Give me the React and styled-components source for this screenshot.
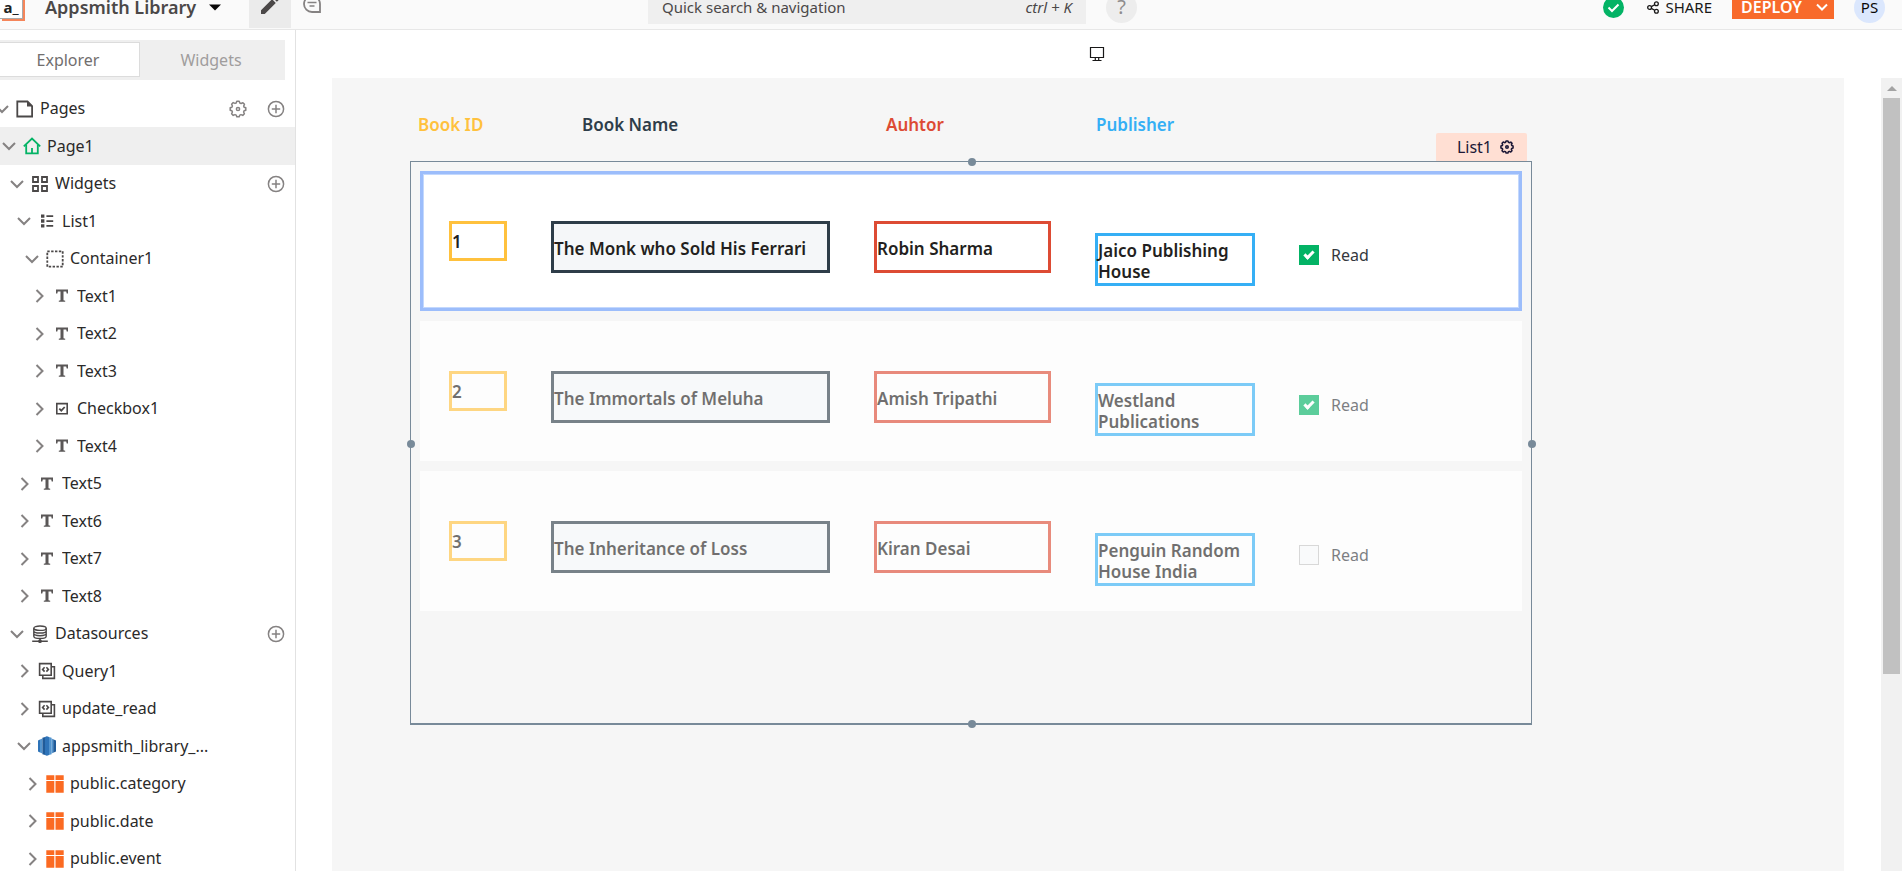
import React from 'react';
import styled, { createGlobalStyle, css } from 'styled-components';

const GlobalStyle = createGlobalStyle`
  *, *::before, *::after { box-sizing: border-box; }
  body {
    margin: 0;
    font-family: "Segoe UI", "Noto Sans", "Open Sans", sans-serif;
    font-size: 16px;
    line-height: 21px;
    color: #2b2a2a;
    background: #fff;
  }
  button, input { font: inherit; color: inherit; }
  svg { display: block; flex: none; }
`;

const resetButton = css`
  border: 0;
  padding: 0;
  background: none;
  display: flex;
  align-items: center;
  justify-content: center;
  cursor: pointer;
`;

const Page = styled.div`
  display: flex;
  flex-direction: column;
  height: 100vh;
  overflow: hidden;
`;

/* ---------- top bar ---------- */

const TopBar = styled.header`
  flex: none;
  height: 30px;
  overflow: hidden;
  background: #fafafa;
  border-bottom: 1px solid #e7e7e7;
`;

const TopBarInner = styled.div`
  display: grid;
  grid-template-columns: minmax(0, 108fr) minmax(0, 73fr) minmax(0, 136fr);
  align-items: center;
  height: 46px;
  margin-top: -16px;
  line-height: 14px;
`;

const TopBarGroup = styled.div`
  display: flex;
  align-items: center;
`;

const Logo = styled.a`
  display: flex;
  align-items: center;
  justify-content: center;
  width: 23px;
  height: 24px;
  margin-right: 22px;
  border: 1px solid #a9a9a9;
  border-left: 0;
  background: #fff;
  box-shadow: 2px 2px 0 #f5855a;
  color: #222;
  font-size: 15px;
  font-weight: 700;
  text-decoration: none;
`;

const AppName = styled.button`
  ${resetButton}
  gap: 13px;
  margin-right: 28px;
  font-size: 18px;
  font-weight: 600;
  color: #4b4848;
`;

const EditButton = styled.button`
  ${resetButton}
  width: 42px;
  height: 42px;
  padding-bottom: 4px;
  background: #ebebeb;
`;

const CommentButton = styled.button`
  ${resetButton}
  padding-bottom: 6px;
  margin-left: 12px;
`;

const Search = styled.label`
  display: flex;
  align-items: center;
  height: 34px;
  padding: 0 14px;
  background: #efefef;
  font-size: 15px;
  color: #4b4848;
`;

const SearchInput = styled.input`
  flex: 1;
  min-width: 0;
  padding: 0;
  border: 0;
  outline: 0;
  background: none;
  &::placeholder { color: #4b4848; opacity: 1; }
`;

const Shortcut = styled.span`
  font-style: italic;
`;

const Round = styled.button`
  ${resetButton}
  width: 31px;
  height: 31px;
  border-radius: 50%;
  background: ${(p) => (p.$tone === 'user' ? '#dbe7fd' : '#ededed')};
  color: ${(p) => (p.$tone === 'user' ? '#090707' : '#8f8c8c')};
  font-size: ${(p) => (p.$tone === 'user' ? '15px' : '20px')};
`;

const HelpSlot = styled.div`
  margin-left: 20px;
  margin-right: auto;
`;

const ShareButton = styled.button`
  ${resetButton}
  gap: 6px;
  margin: 0 20px 0 23px;
  font-size: 15px;
  color: #191818;
`;

const DeployGroup = styled.div`
  display: flex;
  height: 24px;
  margin-right: 20px;
  background: #f86a2b;
  color: #fff;
`;

const DeployButton = styled.button`
  ${resetButton}
  padding: 0 9px;
  font-size: 16px;
  font-weight: 600;
`;

const DeployMenuButton = styled.button`
  ${resetButton}
  padding: 0 5px 0 4px;
`;

const AvatarSlot = styled.div`
  margin-right: 17px;
`;

/* ---------- sidebar ---------- */

const Body = styled.div`
  flex: 1;
  min-height: 0;
  display: flex;
`;

const Sidebar = styled.aside`
  flex: none;
  width: 296px;
  overflow: hidden;
  border-right: 1px solid #e2e2e2;
`;

const Tabs = styled.div`
  display: grid;
  grid-template-columns: 140px 1fr;
  height: 40px;
  margin: 10px 10px 10px 0;
  padding: 2px 0 3px;
  background: #efefef;
`;

const Tab = styled.button`
  ${resetButton}
  padding: 2px 3px 0 0;
  color: #a09d9d;
  ${(p) =>
    p.$active &&
    css`
      background: #fff;
      border: 1px solid #dcdcdc;
      border-left: 0;
      color: #716e6e;
    `}
`;

const Tree = styled.ul`
  margin: 0 0 0 -12px;
  padding: 0;
  list-style: none;
`;

const TreeRow = styled.li`
  display: flex;
  align-items: center;
  height: 37px;
  padding-left: ${(p) => 7 + Math.floor(p.$depth * 7.5)}px;
  padding-right: 10px;
  background: ${(p) => (p.$selected ? '#efefef' : 'transparent')};
  &:nth-child(even) { height: 38px; }
`;

const Toggle = styled.button`
  ${resetButton}
  width: 14px;
  height: 20px;
  margin-right: 7px;
`;

const NodeIcon = styled.span`
  width: 18px;
  margin-right: 6px;
`;

const NodeLabel = styled.span`
  flex: 1;
  min-width: 0;
  overflow: hidden;
  white-space: nowrap;
  text-overflow: ellipsis;
`;

const RowAction = styled.button`
  ${resetButton}
  margin-left: 20px;
`;

/* ---------- canvas ---------- */

const Main = styled.main`
  flex: 1;
  min-width: 0;
  display: flex;
  flex-direction: column;
`;

const DeviceBar = styled.div`
  flex: none;
  display: flex;
  align-items: center;
  justify-content: center;
  height: 48px;
  padding-right: 4px;
`;

const Stage = styled.div`
  flex: 1;
  min-height: 0;
  display: flex;
`;

const Canvas = styled.section`
  flex: 1;
  min-width: 0;
  margin: 0 37px 0 36px;
  background: #f6f6f6;
`;

const Headings = styled.div`
  display: grid;
  grid-template-columns: minmax(0, 164fr) minmax(0, 304fr) minmax(0, 210fr) minmax(0, 436fr);
  height: 83px;
  margin: 0 312px 0 86px;
  padding-top: 36px;
`;

const Heading = styled.div`
  font-size: 17px;
  font-weight: 600;
  color: ${(p) => p.$color};
`;

const ListFrame = styled.div`
  position: relative;
  display: flex;
  flex-direction: column;
  gap: 10px;
  margin: 0 312px 0 78px;
  padding: 9px 9px 112px;
  border: 1px solid #788a99;
  border-bottom-width: 2px;
`;

const NameTag = styled.button`
  ${resetButton}
  position: absolute;
  right: 4px;
  bottom: calc(100% + 1px);
  gap: 8px;
  height: 28px;
  padding: 0 13px 0 21px;
  border-radius: 2px 2px 0 0;
  background: #ffdfd3;
  color: #1d1836;
`;

const Handle = styled.span`
  position: absolute;
  width: 8px;
  height: 8px;
  border-radius: 50%;
  background: #788a99;
  ${(p) => (p.$side === 'top' || p.$side === 'bottom') && css`left: calc(50% - 3px);`}
  ${(p) => (p.$side === 'left' || p.$side === 'right') && css`top: calc(50% - 3px);`}
  ${(p) => (p.$side === 'top' || p.$side === 'left' ? css`${p.$side}: -4px;` : css`${p.$side}: -5px;`)}
`;

const BookRow = styled.article`
  display: grid;
  grid-template-columns: minmax(0, 58fr) minmax(0, 279fr) minmax(0, 177fr) minmax(0, 160fr) minmax(0, 223fr);
  column-gap: 44px;
  align-items: start;
  height: 140px;
  padding: 50px 0 0 29px;
  background: ${(p) => (p.$selected ? '#fff' : '#fdfdfd')};
  ${(p) =>
    p.$selected
      ? css`box-shadow: inset 0 0 0 3px #9cbdfb, inset 0 0 0 4px #c3d8fd;`
      : css`& > * { opacity: 0.64; }`}
`;

const Cell = styled.div`
  display: flex;
  align-items: center;
  height: ${(p) => (p.$small ? '40px' : '52px')};
  padding-top: ${(p) => (p.$small ? '0' : '2px')};
  border: 3px solid ${(p) => p.$color};
  background: ${(p) => p.$fill || 'transparent'};
  font-size: 17px;
  font-weight: 600;
  color: #231f20;
`;

const PublisherCell = styled(Cell)`
  height: 53px;
  margin-top: 12px;
`;

const ReadField = styled.label`
  display: flex;
  align-items: center;
  gap: 12px;
  margin-top: 24px;
  line-height: 20px;
  color: #35383d;
`;

const ReadBox = styled.input`
  appearance: none;
  position: relative;
  width: 20px;
  height: 20px;
  margin: 0;
  border: 1px solid #c4c4c4;
  background: #f7f9fb;
  &:checked { border-color: #03b365; background: #03b365; }
  &:checked::after {
    content: "";
    position: absolute;
    left: 6px;
    top: 3px;
    width: 6px;
    height: 10px;
    border: solid #fff;
    border-width: 0 3px 3px 0;
    transform: rotate(45deg);
  }
`;

const ScrollTrack = styled.div`
  flex: none;
  display: flex;
  flex-direction: column;
  align-items: center;
  width: 21px;
  background: #f1f1f1;
  &::after { content: ""; flex: 197; }
`;

const ScrollArrow = styled.div`
  display: flex;
  align-items: center;
  height: 20px;
`;

const ScrollThumb = styled.div`
  flex: 576;
  width: 17px;
  background: #c1c1c1;
`;

/* ---------- icons ---------- */

const Chevron = ({ open, color = '#858282' }) => (
  <svg width="14" height="14" viewBox="0 0 14 14" fill="none" stroke={color} strokeWidth="2">
    <path d={open ? 'M1 4l6 6 6-6' : 'M4.5 1l6 6-6 6'} />
  </svg>
);

const Gear = ({ size, color, width = 1.5 }) => (
  <svg width={size} height={size} viewBox="0 0 18 18" fill="none" stroke={color} strokeWidth={width} strokeLinejoin="round">
    <path d="M7.2 3 7.8 1.2h2.4L10.8 3l1.3.5 1.8-.8 1.6 1.6-.8 1.8.4 1.1 1.7.6v2.4l-1.7.6-.5 1.2.8 1.8-1.6 1.6-1.8-.8-1.2.5-.6 1.7H7.8l-.6-1.700-1.200-.5-1.800.8-1.600-1.600.8-1.800-.5-1.200-1.700-.6V7.800l1.700-.6L3.400 6l-.8-1.800 1.600-1.600 1.800.8z" />
    <circle cx="9" cy="9" r="1.6" />
  </svg>
);

const PlusCircle = () => (
  <svg width="18" height="18" viewBox="0 0 18 18" fill="none" stroke="#858282" strokeWidth="1.5">
    <circle cx="9" cy="9" r="7.6" />
    <path d="M9 4.8v8.4M4.8 9h8.4" />
  </svg>
);

const DARK = '#4b4848';

const nodeIcons = {
  page: (
    <g fill="none" stroke={DARK} strokeWidth="1.8">
      <path d="M1.300 1.500h10.200l4.600 4.600v10.400H1.300z" />
      <path d="M11 1.200v5.400h5.400z" fill={DARK} stroke="none" />
    </g>
  ),
  home: (
    <g fill="none" stroke="#03b365" strokeWidth="1.8">
      <path d="M.8 9.4 9 1.6l8.200 7.800" />
      <path d="M3.200 7.400v9h11.600v-9" />
      <path d="M9 11v5.400" />
    </g>
  ),
  widgets: (
    <g fill="none" stroke={DARK} strokeWidth="1.8">
      <path d="M2 2h5v5H2zM11 2h5v5h-5zM2 11h5v5H2zM11 11h5v5h-5z" />
    </g>
  ),
  list: (
    <g fill={DARK}>
      <path d="M3 2.400h3.400v3.400H3zM3 7.300h3.400v3.400H3zM3 12.200h3.400v3.400H3zM8.400 3.200h6.800v1.700H8.400zM8.400 8.200h6.800v1.700H8.400zM8.400 13h6.800v1.700H8.400z" />
    </g>
  ),
  container: (
    <rect x="1.300" y="1.300" width="15.400" height="15.400" fill="none" stroke={DARK} strokeWidth="1.800" strokeDasharray="2.400 1.450" />
  ),
  text: (
    <path fill="#5a5757" d="M3 2.600h12v3.800h-1.300l-.5-2h-2.700v8.800l1.700.5v1.100H5.800v-1.100l1.700-.5V4.400H4.800l-.5 2H3z" />
  ),
  checkbox: (
    <g fill="none" stroke={DARK} strokeWidth="1.600">
      <path d="M3.800 3.600h10.400v10.200H3.800z" />
      <path d="M6.300 8.600l2 2 3.400-3.600" strokeWidth="1.800" />
    </g>
  ),
  datasource: (
    <g fill="none" stroke={DARK} strokeWidth="1.400">
      <ellipse cx="9" cy="3.200" rx="6.200" ry="2.200" />
      <path d="M2.800 3.200v8c0 1.200 2.800 2.200 6.200 2.200s6.200-1 6.200-2.200v-8M2.800 5.900C2.800 7.100 5.600 8 9 8s6.200-.9 6.200-2.100M2.800 8.600c0 1.200 2.800 2.100 6.200 2.100s6.200-.9 6.200-2.100M9 13.400V16M1.200 16.200h15.600" />
      <circle cx="9" cy="16.200" r="1.200" fill={DARK} />
    </g>
  ),
  query: (
    <g fill="none" stroke={DARK} strokeWidth="1.600">
      <path d="M1.600 1.600h11.600v11.600H1.600z" />
      <path d="M13.200 4.800h3.200v11.600H4.800v-3.200" />
      <path d="M6.600 5.200 4.600 7.400l2 2.200M8.400 5.200l2 2.200-2 2.200" />
    </g>
  ),
  redshift: (
    <g>
      <path fill="#2e73b8" d="M0 3.400 2 2.600v12.800l-2-.8z" />
      <path fill="#5294cf" d="M2 2.600 4.400 1.600v14.800L2 15.400z" />
      <path fill="#205b99" d="M4.400.8 9-.6v19.200l-4.600-1.400z" />
      <path fill="#5294cf" d="M9-.6 13.600.8v16.400L9 18.600z" />
      <path fill="#2e73b8" d="M7-.1 9-.6l2 .5v18.200l-2 .5-2-.5z" />
      <path fill="#5294cf" d="M13.600 1.600 15.200 2.300v13.400l-1.600.7z" />
      <path fill="#205b99" d="M15.200 2.300 18 3.400v11.200l-2.800 1.100z" />
    </g>
  ),
  table: (
    <g fill="#fb6a22">
      <path d="M.3.3h8v4.600h-8zM9.500.3h8.200v4.600H9.500zM.3 6h8v11.700h-8zM9.500 6h8.200v11.700H9.500z" />
    </g>
  ),
};

const Glyph = ({ name }) => (
  <svg width="18" height="18" viewBox="0 0 18 18" overflow="visible" aria-hidden="true">
    {nodeIcons[name]}
  </svg>
);

/* ---------- data ---------- */

const tree = [
  { label: 'Pages', icon: 'page', depth: 0, open: true, settings: true, add: true },
  { label: 'Page1', icon: 'home', depth: 1, open: true, selected: true },
  { label: 'Widgets', icon: 'widgets', depth: 2, open: true, add: true },
  { label: 'List1', icon: 'list', depth: 3, open: true },
  { label: 'Container1', icon: 'container', depth: 4, open: true },
  { label: 'Text1', icon: 'text', depth: 5 },
  { label: 'Text2', icon: 'text', depth: 5 },
  { label: 'Text3', icon: 'text', depth: 5 },
  { label: 'Checkbox1', icon: 'checkbox', depth: 5 },
  { label: 'Text4', icon: 'text', depth: 5 },
  { label: 'Text5', icon: 'text', depth: 3 },
  { label: 'Text6', icon: 'text', depth: 3 },
  { label: 'Text7', icon: 'text', depth: 3 },
  { label: 'Text8', icon: 'text', depth: 3 },
  { label: 'Datasources', icon: 'datasource', depth: 2, open: true, add: true },
  { label: 'Query1', icon: 'query', depth: 3 },
  { label: 'update_read', icon: 'query', depth: 3 },
  { label: 'appsmith_library_...', icon: 'redshift', depth: 3, open: true },
  { label: 'public.category', icon: 'table', depth: 4 },
  { label: 'public.date', icon: 'table', depth: 4 },
  { label: 'public.event', icon: 'table', depth: 4 },
];

const colors = { id: '#ffc13d', name: '#2e3d49', author: '#dd4b34', publisher: '#35aff5' };

const headings = [
  ['Book ID', colors.id],
  ['Book Name', colors.name],
  ['Auhtor', colors.author],
  ['Publisher', colors.publisher],
];

const books = [
  { id: 1, name: 'The Monk who Sold His Ferrari', author: 'Robin Sharma', publisher: 'Jaico Publishing House', read: true },
  { id: 2, name: 'The Immortals of Meluha', author: 'Amish Tripathi', publisher: 'Westland Publications', read: true },
  { id: 3, name: 'The Inheritance of Loss', author: 'Kiran Desai', publisher: 'Penguin Random House India', read: false },
];

/* ---------- parts ---------- */

function Header() {
  return (
    <TopBar>
      <TopBarInner>
        <TopBarGroup>
          <Logo href="#" aria-label="Appsmith home">a_</Logo>
          <AppName type="button">
            Appsmith Library
            <svg width="12" height="7" viewBox="0 0 12 7"><path d="M0 .5h12L6 6.500z" fill="#090707" /></svg>
          </AppName>
          <EditButton type="button" aria-label="Edit">
            <svg width="24" height="24" viewBox="0 0 24 24" fill={DARK}>
              <path d="M3 17.250V21h3.750L17.810 9.940l-3.750-3.750zM20.710 7.040a1 1 0 0 0 0-1.410l-2.340-2.340a1 1 0 0 0-1.410 0l-1.830 1.830 3.750 3.750z" />
            </svg>
          </EditButton>
          <CommentButton type="button" aria-label="Comments">
            <svg width="18" height="18" viewBox="0 0 18 18" fill="none" stroke="#858282" strokeWidth="1.800">
              <path d="M9 1a8 8 0 0 0 0 16h8V9a8 8 0 0 0-8-8z" />
              <path d="M4.500 7.400h9M6.500 11h5" strokeWidth="1.500" />
            </svg>
          </CommentButton>
        </TopBarGroup>
        <Search>
          <SearchInput type="text" placeholder="Quick search &amp; navigation" aria-label="Quick search and navigation" />
          <Shortcut>ctrl + K</Shortcut>
        </Search>
        <TopBarGroup>
          <HelpSlot>
            <Round type="button">?</Round>
          </HelpSlot>
          <svg width="21" height="21" viewBox="0 0 21 21" role="img" aria-label="Saved">
            <circle cx="10.500" cy="10.500" r="10.500" fill="#03b365" />
            <path d="M5.500 10.500l3.500 3.500 6.500-6.500" fill="none" stroke="#fff" strokeWidth="2" />
          </svg>
          <ShareButton type="button">
            <svg width="12" height="13" viewBox="0 0 12 13" fill="none" stroke="#191818" strokeWidth="1.300">
              <circle cx="2.600" cy="6.500" r="1.900" />
              <circle cx="9.400" cy="2.800" r="1.900" />
              <circle cx="9.400" cy="10.200" r="1.900" />
              <path d="M4.300 5.600l3.400-1.900M4.300 7.400l3.400 1.900" />
            </svg>
            SHARE
          </ShareButton>
          <DeployGroup>
            <DeployButton type="button">DEPLOY</DeployButton>
            <DeployMenuButton type="button" aria-label="Deploy options">
              <svg width="14" height="14" viewBox="0 0 14 14" fill="none" stroke="#fff" strokeWidth="2">
                <path d="M2 4.500l5 5 5-5" />
              </svg>
            </DeployMenuButton>
          </DeployGroup>
          <AvatarSlot>
            <Round type="button" $tone="user">PS</Round>
          </AvatarSlot>
        </TopBarGroup>
      </TopBarInner>
    </TopBar>
  );
}

function Explorer() {
  return (
    <Sidebar>
      <Tabs>
        <Tab type="button" $active>Explorer</Tab>
        <Tab type="button">Widgets</Tab>
      </Tabs>
      <Tree>
        {tree.map((node) => (
          <TreeRow key={node.label} $depth={node.depth} $selected={node.selected}>
            <Toggle type="button" aria-label={`Toggle ${node.label}`}>
              <Chevron open={node.open} />
            </Toggle>
            <NodeIcon><Glyph name={node.icon} /></NodeIcon>
            <NodeLabel>{node.label}</NodeLabel>
            {node.settings && (
              <RowAction type="button" aria-label="Page settings"><Gear size={18} color="#858282" /></RowAction>
            )}
            {node.add && (
              <RowAction type="button" aria-label={`Add to ${node.label}`}><PlusCircle /></RowAction>
            )}
          </TreeRow>
        ))}
      </Tree>
    </Sidebar>
  );
}

function Book({ book, selected }) {
  return (
    <BookRow $selected={selected}>
      <Cell $small $color={colors.id}>{book.id}</Cell>
      <Cell $color={colors.name} $fill="#f5f7f9">{book.name}</Cell>
      <Cell $color={colors.author}>{book.author}</Cell>
      <PublisherCell $color={colors.publisher}>{book.publisher}</PublisherCell>
      <ReadField>
        <ReadBox type="checkbox" defaultChecked={book.read} />
        Read
      </ReadField>
    </BookRow>
  );
}

export default function App() {
  return (
    <Page>
      <GlobalStyle />
      <Header />
      <Body>
        <Explorer />
        <Main>
          <DeviceBar>
            <svg width="16" height="16" viewBox="0 0 16 16" fill="none" stroke="#191818" strokeWidth="1.200" aria-hidden="true">
              <path d="M1.500 1.500h13v10h-13zM6.300 11.500V14M9.700 11.500V14M3.500 14.500h9" />
            </svg>
          </DeviceBar>
          <Stage>
            <Canvas>
              <Headings>
                {headings.map(([label, color]) => (
                  <Heading key={label} $color={color}>{label}</Heading>
                ))}
              </Headings>
              <ListFrame>
                {books.map((book, i) => (
                  <Book key={book.id} book={book} selected={i === 0} />
                ))}
                <NameTag type="button">
                  List1
                  <Gear size={14} color="#1d1836" width={2} />
                </NameTag>
                <Handle $side="top" />
                <Handle $side="right" />
                <Handle $side="bottom" />
                <Handle $side="left" />
              </ListFrame>
            </Canvas>
            <ScrollTrack aria-hidden="true">
              <ScrollArrow>
                <svg width="10" height="5" viewBox="0 0 10 5"><path d="M5 0l5 5H0z" fill="#a3a3a3" /></svg>
              </ScrollArrow>
              <ScrollThumb />
            </ScrollTrack>
          </Stage>
        </Main>
      </Body>
    </Page>
  );
}
